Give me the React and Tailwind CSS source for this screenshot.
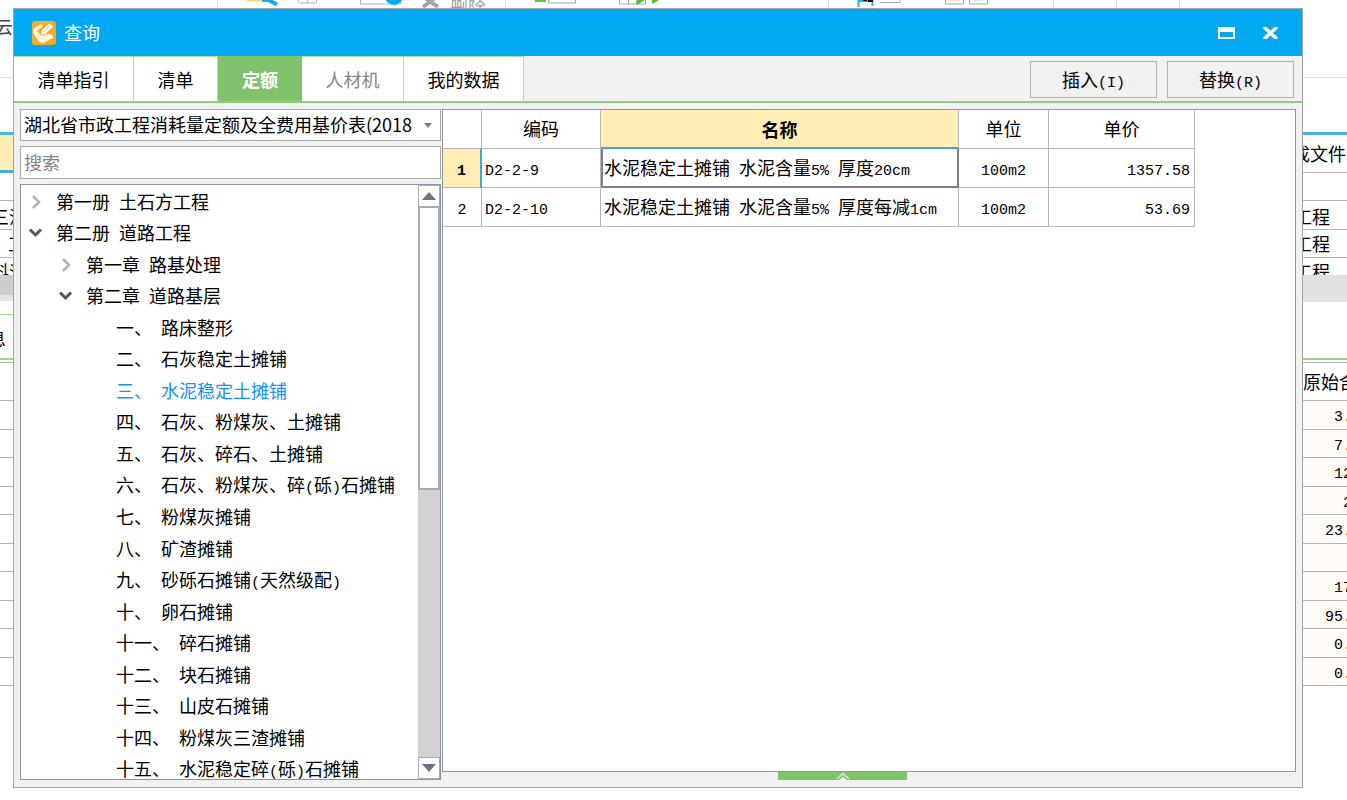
import React, { useState } from "react";

const treeItems = [
  { level: 0, open: false, label: "第一册 土石方工程" },
  { level: 0, open: true, label: "第二册 道路工程" },
  { level: 1, open: false, label: "第一章 路基处理" },
  { level: 1, open: true, label: "第二章 道路基层" },
  { level: 2, label: "一、 路床整形" },
  { level: 2, label: "二、 石灰稳定土摊铺" },
  { level: 2, label: "三、 水泥稳定土摊铺" },
  { level: 2, label: "四、 石灰、粉煤灰、土摊铺" },
  { level: 2, label: "五、 石灰、碎石、土摊铺" },
  { level: 2, label: "六、 石灰、粉煤灰、碎(砾)石摊铺" },
  { level: 2, label: "七、 粉煤灰摊铺" },
  { level: 2, label: "八、 矿渣摊铺" },
  { level: 2, label: "九、 砂砾石摊铺(天然级配)" },
  { level: 2, label: "十、 卵石摊铺" },
  { level: 2, label: "十一、 碎石摊铺" },
  { level: 2, label: "十二、 块石摊铺" },
  { level: 2, label: "十三、 山皮石摊铺" },
  { level: 2, label: "十四、 粉煤灰三渣摊铺" },
  { level: 2, label: "十五、 水泥稳定碎(砾)石摊铺" },
];

const indents = ["pl-[7px]", "pl-[37px]", "pl-[67px]"];

const rows = [
  { code: "D2-2-9", name: "水泥稳定土摊铺 水泥含量5% 厚度20cm", unit: "100m2", price: "1357.58" },
  { code: "D2-2-10", name: "水泥稳定土摊铺 水泥含量5% 厚度每减1cm", unit: "100m2", price: "53.69" },
];

const amounts = [" 3.", " 7.", " 12", "  2", "23.", "", " 17", "95.", " 0.", " 0."];

// latin runs are half the width of a chinese character
const Mixed = ({ children }) =>
  children.split(/([\x20-\x7e]+)/).map((part, i) =>
    i % 2 ? (
      <span key={i} className="font-['Liberation_Mono',monospace] text-[15px] leading-none whitespace-pre">
        {part}
      </span>
    ) : (
      part
    )
  );

const Toolbar = () => (
  <div className="h-[78px] border-b border-[#dedede]">
    <div className="flex h-2 overflow-hidden pl-[217px]">
      <div className="w-[30px] shrink-0 border-l border-[#dedede]" />
      <svg className="w-[240px] h-2 shrink-0" viewBox="0 0 240 8" fill="none">
        <path d="M0 0h16" stroke="#fbd680" strokeWidth="3" />
        <path d="M15 0h6q2 0 3 1.500l6 3" stroke="#1ba9e8" strokeWidth="4" />
        <path d="M51.500 -2v4q0 1 1 1h16q1 0 1-1v-4M60.500 -2v5" stroke="#b5b5b5" />
        <path d="M113.500 -2v6h40v-6" stroke="#b0b0b0" />
        <circle cx="147" cy="-4" r="9" fill="#00aeef" />
        <path d="M176 7l12-9M178 -2l13 9" stroke="#a5a5a5" strokeWidth="4" />
      </svg>
      <span className="-mt-0.5 -ml-[37px] w-[55px] shrink-0 text-[18px] leading-none text-[#a0a0a0]">删除</span>
      <div className="w-[30px] shrink-0 border-l border-[#dedede]" />
      <svg className="w-[293px] h-2 shrink-0" viewBox="0 0 293 8" fill="none">
        <path d="M0 1h11" stroke="#65bf55" strokeWidth="2" />
        <path d="M13.500 -1v4h27v-4" stroke="#a8a8a8" />
        <path d="M84.500 -1v5h26v-5M93.500 -1v5M101.500 -1v5" stroke="#a8a8a8" />
        <path d="M102 5v-5h8zM117 4v-4h7z" fill="#4cc322" />
      </svg>
      <div className="w-[29px] shrink-0 border-l border-[#dedede]" />
      <svg className="w-[196px] h-2 shrink-0" viewBox="0 0 196 8" fill="none">
        <path d="M1.500 7v-6h14v5" stroke="#18b8f2" strokeWidth="2" />
        <path d="M6 0h4M11 1h5" stroke="#113" strokeWidth="2" />
        <path d="M23 2.500h20v-3M88.500 -1v5h18v-5M112.500 -1v5h18v-5" stroke="#a8a8a8" />
        <path d="M92 .5h10" stroke="#ffd8d2" />
        <path d="M116 .5h10" stroke="#cfe6fa" />
      </svg>
      <div className="w-[63px] shrink-0 border-l border-[#dedede]" />
      <div className="w-[63px] shrink-0 border-l border-[#dedede]" />
      <div className="shrink-0 border-l border-[#dedede]" />
    </div>
    <p className="mt-2 w-[13px] overflow-hidden -indent-[5px] whitespace-nowrap text-[18px] leading-5 text-[#444]">云</p>
  </div>
);

const Background = () => (
  <div>
    <Toolbar />
    <div className="h-[54px]" />
    <div className="flex justify-between border-t-3 border-[#45b6e4]">
      <div className="w-[13px] overflow-hidden whitespace-nowrap">
        <div className="h-[38px] border-b-3 border-[#3fb0da] bg-[#ffedb5]" />
        <div className="h-7 border-b border-[#b5b5b5]" />
        <div className="h-[29px] border-b border-[#b5b5b5] -indent-[9px] leading-[30px]">三沙</div>
        <div className="h-[28px] border-b border-[#b5b5b5] indent-[8px] leading-[26px]">工</div>
        <div className="h-[17px] overflow-hidden -indent-[9px] leading-[26px]">料沙</div>
        <div className="h-5 bg-[#cdcdcd]" />
        <div className="h-1.5 bg-[#e3e3e3]" />
        <div className="mt-[13px] h-[46px] border-t border-b-2 border-[#9bd78a] -indent-[12px] leading-[46px]">息</div>
        <div className="mt-0.5 h-[39px] border-y border-[#b5b5b5]" />
        <div className="grid h-[285px] auto-rows-fr">
          {amounts.map((a, i) => (
            <div key={i} className="border-b border-[#b5b5b5]" />
          ))}
        </div>
      </div>
      <div className="w-11 overflow-hidden whitespace-nowrap">
        <div className="h-[38px] border-b border-[#b5b5b5] -indent-[11px] leading-9">成文件</div>
        <div className="h-7 border-b border-[#b5b5b5]" />
        <div className="h-[29px] border-b border-[#b5b5b5] -indent-[9px] leading-[30px]">工程</div>
        <div className="h-[28px] border-b border-[#b5b5b5] -indent-[9px] leading-[26px]">工程</div>
        <div className="h-[17px] overflow-hidden -indent-[9px] leading-[26px]">工程</div>
        <div className="h-[27px] bg-[#e1e1e1]" />
        <div className="h-[58px] border-b-2 border-[#9bd78a]" />
        <div className="mt-0.5 h-[39px] border-y border-[#b5b5b5] leading-9">原始含</div>
        <div className="grid h-[285px] auto-rows-fr bg-[#fffcf7]">
          {amounts.map((a, i) => (
            <div key={i} className="border-b border-[#b5b5b5] pl-[22px] leading-6">
              <Mixed>{a}</Mixed>
            </div>
          ))}
        </div>
      </div>
    </div>
  </div>
);

const TitleBar = () => (
  <header className="flex h-[47px] shrink-0 items-center bg-[#02a9f2] pl-[18px] pr-[23px] text-white">
    <svg className="size-6" viewBox="0 0 24 24">
      <rect width="24" height="24" rx="3" fill="#fbab1c" />
      <path
        d="M9 5L4 8Q2 9.500 3 11.500L7 18Q9 21 12 19.500L19 16"
        fill="none"
        stroke="#fff6e6"
        strokeWidth="3.500"
        strokeLinecap="round"
        strokeLinejoin="round"
      />
      <path d="M4 9l5 5l10-1l2 3l-10 6z" fill="#fff6e6" />
      <path d="M8.500 14l1-5l8-7l4 3.500l-8.500 8z" fill="#fff" stroke="#f3a93a" strokeWidth=".8" />
      <path d="M11 11.500l6.500-6" stroke="#f3a93a" strokeWidth="1" />
    </svg>
    <h1 className="ml-2 flex-1 text-[18px] leading-5 pb-0.5">查询</h1>
    <button aria-label="最大化" className="mr-[27px]">
      <svg className="h-3 w-[17px]" viewBox="0 0 17 12">
        <path d="M0 0h17v12H0zM2 5v5h13V5z" fill="#fff" fillRule="evenodd" />
      </svg>
    </button>
    <button aria-label="关闭">
      <svg className="h-3 w-[17px]" viewBox="0 0 17 12">
        <path d="M2 0L15 12M15 0L2 12" stroke="#fff" strokeWidth="3.500" />
      </svg>
    </button>
  </header>
);

const tabClass = "border-t border-r border-[#aee29b] bg-white";

const Tabs = () => (
  <div className="flex h-[47px] shrink-0 items-start justify-between border-b-2 border-[#91cd80] pr-2">
    <nav className="flex h-[45px]">
      <button className={`${tabClass} w-[120px] pb-px`}>清单指引</button>
      <button className={`${tabClass} w-[84px] pb-px`}>清单</button>
      <button className="w-[84px] bg-[#81c26c] font-bold text-white">定额</button>
      <button className={`${tabClass} w-[102px] pb-px text-[#858585]`}>人材机</button>
      <button className={`${tabClass} w-[120px] pb-px`}>我的数据</button>
    </nav>
    <div className="mt-[5px] flex gap-2.5">
      <button className="h-[37px] w-[127px] border border-[#b0b0b0] pb-0.5">
        <Mixed>插入(I)</Mixed>
      </button>
      <button className="h-[37px] w-[127px] border border-[#b0b0b0] pb-0.5">
        <Mixed>替换(R)</Mixed>
      </button>
    </div>
  </div>
);

const Chevron = ({ open }) => (
  <svg className="size-4 shrink-0" viewBox="0 0 16 16" fill="none" strokeWidth="3">
    {open ? <path d="M2 5.500L7.500 11L13 5.500" stroke="#555" /> : <path d="M5 3L11 9L5 15" stroke="#b2b2b2" strokeWidth="2.500" />}
  </svg>
);

const ScrollBar = () => (
  <div className="flex w-[22px] shrink-0 flex-col bg-[#d2d2d2]">
    <button aria-label="向上" className="flex h-[22px] items-center justify-center border border-[#aaa] bg-white">
      <svg className="h-2 w-[14px]" viewBox="0 0 14 8">
        <path d="M0 8L7 0L14 8z" fill="#6b7280" />
      </svg>
    </button>
    <div className="h-[283px] border-2 border-t border-[#aaa] bg-white" />
    <button aria-label="向下" className="mt-auto flex h-[22px] items-center justify-center border border-[#aaa] bg-white">
      <svg className="h-2 w-[14px]" viewBox="0 0 14 8">
        <path d="M0 0L7 8L14 0z" fill="#6b7280" />
      </svg>
    </button>
  </div>
);

const Sidebar = () => {
  const [selected, setSelected] = useState(6);

  return (
    <aside className="flex w-[421px] shrink-0 flex-col gap-[5px]">
      <div className="relative">
        <select
          aria-label="定额库"
          className="block h-8 w-full appearance-none border border-[#aaa] bg-white pl-[3px] pr-5 pb-0.5 text-[18px] outline-none">
          <option>湖北省市政工程消耗量定额及全费用基价表(2018</option>
        </select>
        <svg className="pointer-events-none absolute right-[9px] top-3.5 h-[5px] w-2" viewBox="0 0 8 5">
          <path d="M0 0h8L4 5z" fill="#7b8088" />
        </svg>
      </div>
      <input
        type="text"
        aria-label="搜索"
        placeholder="搜索"
        className="h-[33px] w-full shrink-0 border border-[#aaa] bg-white pl-[3px] pb-0.5 text-[18px] outline-none placeholder:text-[#858585]"
      />
      <div className="flex min-h-0 flex-1 overflow-hidden border border-[#8d95a0] bg-white">
        <ul className="grid h-[599px] flex-1 auto-rows-fr">
          {treeItems.map((item, i) => (
            <li key={item.label} className="min-h-0">
              <button
                onClick={() => setSelected(i)}
                className={`flex h-full w-full items-center gap-3 whitespace-nowrap ${indents[item.level]} ${
                  selected === i ? "text-[#1492f5]" : ""
                }`}>
                {item.level < 2 ? <Chevron open={item.open} /> : <span className="w-4" />}
                <span>
                  <Mixed>{item.label}</Mixed>
                </span>
              </button>
            </li>
          ))}
        </ul>
        <ScrollBar />
      </div>
    </aside>
  );
};

const cell = "border-r border-b border-[#b8b8b8]";

const PriceTable = () => (
  <table className="w-[752px] table-fixed border-separate border-spacing-0">
    <colgroup>
      <col className="w-[39px]" />
      <col className="w-[119px]" />
      <col className="w-[358px]" />
      <col className="w-[90px]" />
      <col className="w-[146px]" />
    </colgroup>
    <thead>
      <tr className="h-[39px]">
        <th className={cell}></th>
        <th className={`${cell} pb-0.5 font-normal`}>编码</th>
        <th className="border-r border-b-2 border-r-[#b8b8b8] border-b-[#3fa9d0] bg-[#ffedb5] font-bold">名称</th>
        <th className={`${cell} pb-0.5 font-normal`}>单位</th>
        <th className={`${cell} pb-0.5 font-normal`}>单价</th>
      </tr>
    </thead>
    <tbody>
      {rows.map((row, i) => (
        <tr key={row.code} className="h-[39px]">
          <th
            className={
              i === 0
                ? "border-r-2 border-b border-r-[#3fa9d0] border-b-[#b8b8b8] bg-[#ffedb5] pb-[3px] font-bold"
                : `${cell} pb-[3px] font-normal`
            }>
            <Mixed>{String(i + 1)}</Mixed>
          </th>
          <td className={`${cell} pb-[3px] pl-[3px]`}>
            <Mixed>{row.code}</Mixed>
          </td>
          <td className={i === 0 ? "border-2 border-t-0 border-[#7f7f7f] pb-0.5 pl-px" : `${cell} pb-[3px] pl-[3px]`}>
            <Mixed>{row.name}</Mixed>
          </td>
          <td className={`${cell} pb-[3px] text-center`}>
            <Mixed>{row.unit}</Mixed>
          </td>
          <td className={`${cell} pr-1 pb-[3px] text-right`}>
            <Mixed>{row.price}</Mixed>
          </td>
        </tr>
      ))}
    </tbody>
  </table>
);

const QueryDialog = () => (
  <section
    role="dialog"
    aria-label="查询"
    className="absolute top-2 right-11 bottom-3 left-[13px] flex flex-col border border-[#a3a3a3] bg-[#f1f1f1]">
    <TitleBar />
    <Tabs />
    <div className="flex min-h-0 flex-1 gap-px px-1.5 pt-1.5 pb-[7px]">
      <Sidebar />
      <div className="flex min-w-0 flex-1 flex-col">
        <div className="min-h-0 flex-1 border border-[#8d95a0] bg-white">
          <PriceTable />
        </div>
        <button aria-label="展开" className="ml-[336px] flex h-2 w-[129px] justify-center bg-[#81c26c]">
          <svg className="h-2 w-[14px]" viewBox="0 0 14 8" fill="none">
            <path d="M1 7L7 1.500L13 7" stroke="#c5e6b9" strokeWidth="2" />
            <path d="M3.500 8L7 5L10.500 8z" fill="#fff" />
          </svg>
        </button>
      </div>
    </div>
  </section>
);

export default function App() {
  return (
    <main className="relative min-h-screen overflow-hidden bg-white font-['Noto_Sans_CJK_SC',sans-serif] text-[18px] leading-6 text-black">
      <Background />
      <QueryDialog />
    </main>
  );
}
